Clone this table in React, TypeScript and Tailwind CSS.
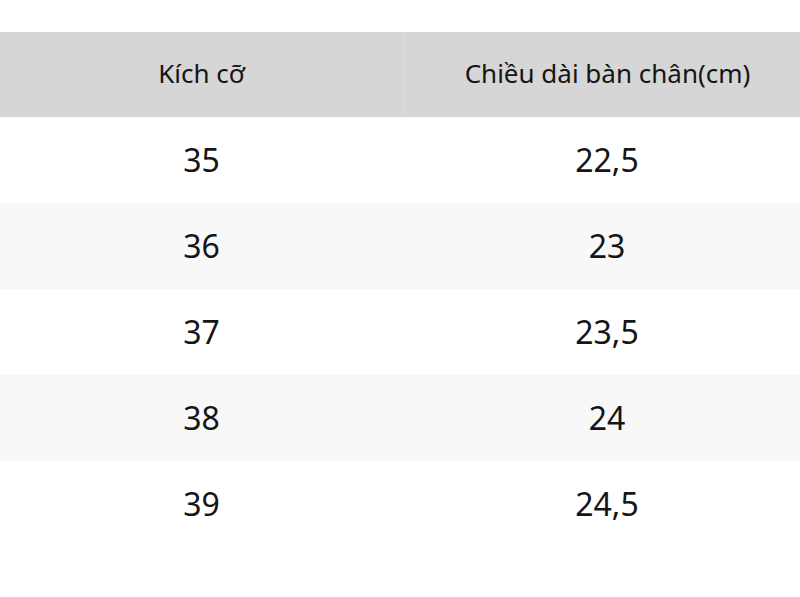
import React from "react";

const rows = [
  ["35", "22,5"],
  ["36", "23"],
  ["37", "23,5"],
  ["38", "24"],
  ["39", "24,5"],
];

export default function App() {
  return (
    <div
      className="w-[800px] h-[597px] bg-white overflow-hidden text-[#151515]"
      style={{ fontFamily: '"Noto Sans", "Open Sans", sans-serif' }}
    >
      <div className="h-[32px]" />
      <div className="w-[811px]">
        <div className="grid grid-cols-[403px_408px] h-[85px] bg-[#d6d6d6] text-[26px] leading-none">
          <div className="flex items-center justify-center pb-[4px]">Kích cỡ</div>
          <div className="flex items-center justify-center pb-[4px] border-l border-[#dcdcdc]">
            Chiều dài bàn chân(cm)
          </div>
        </div>
        {rows.map((r, i) => (
          <div
            key={r[0]}
            className={
              "grid grid-cols-[403px_408px] h-[86px] text-[32px] " +
              (i % 2 === 1 ? "bg-[#f8f8f8]" : "bg-white")
            }
          >
            <div className="flex items-center justify-center">{r[0]}</div>
            <div className="flex items-center justify-center">{r[1]}</div>
          </div>
        ))}
      </div>
    </div>
  );
}
